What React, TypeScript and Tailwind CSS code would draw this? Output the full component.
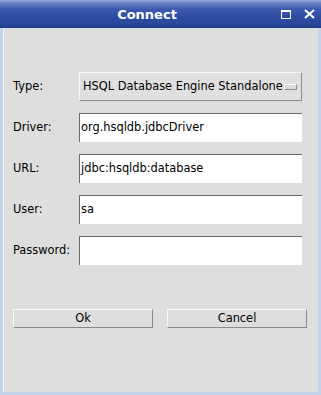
import React from "react";

function Field({ value }: { value: string }) {
  return (
    <div className="flex-1 h-[29px] bg-white border-t border-l border-[#6a6a6a] flex items-center pl-[1px] text-black">
      {value}
    </div>
  );
}

function Row({ label, children }: { label: string; children: React.ReactNode }) {
  return (
    <div className="flex items-center h-[29px]">
      <div className="w-[66px] text-black">{label}</div>
      {children}
    </div>
  );
}

function Button({ label }: { label: string }) {
  return (
    <div className="w-[140px] h-[19px] flex items-center justify-center border border-t-[#fafafa] border-l-[#fafafa] border-b-[#8a8a8a] border-r-[#8a8a8a] bg-[#dedede] text-black">
      {label}
    </div>
  );
}

export default function App() {
  return (
    <div
      className="w-[321px] h-[395px] flex flex-col bg-[#c4d2ea] text-[11.4px]"
      style={{ fontFamily: '"DejaVu Sans", sans-serif' }}
    >
      <div className="h-[28px] flex items-center bg-[linear-gradient(to_bottom,#9aacdc_0px,#6a82c6_3px,#3d5bae_9px,#2c4ba0_18px,#2a479a_25px,#1f3a88_27px)]">
        <div className="w-[281px] pl-[13px] text-center text-white font-bold text-[13px] leading-none">
          Connect
        </div>
        <div className="flex items-center gap-[13px]">
          <div className="w-[10px] h-[9px] border border-t-2 border-white" />
          <svg width="11" height="10" viewBox="0 0 11 10">
            <path d="M1 1 L10 9 M10 1 L1 9" stroke="white" strokeWidth="2" />
          </svg>
        </div>
      </div>
      <div className="flex-1 flex flex-col ml-[3px] mr-[3px] mb-[3px] bg-[#dedede] border-l border-[#eef2f9]">
        <div className="flex flex-col gap-[12px] pt-[44px] pl-[9px] pr-[16px]">
          <Row label="Type:">
            <div className="flex-1 h-[29px] flex items-center justify-between pl-[3px] pr-[4px] border border-t-[#f8f8f8] border-l-[#f8f8f8] border-b-[#8a8a8a] border-r-[#8a8a8a] bg-[#e0e0e0] text-black">
              <span>HSQL Database Engine Standalone</span>
              <div className="w-[13px] h-[6px] border border-t-[#fafafa] border-l-[#fafafa] border-b-[#8a8a8a] border-r-[#8a8a8a] bg-[#dcdcdc]" />
            </div>
          </Row>
          <Row label="Driver:">
            <Field value="org.hsqldb.jdbcDriver" />
          </Row>
          <Row label="URL:">
            <Field value="jdbc:hsqldb:database" />
          </Row>
          <Row label="User:">
            <Field value="sa" />
          </Row>
          <Row label="Password:">
            <Field value="" />
          </Row>
        </div>
        <div className="flex gap-[14px] pt-[44px] pl-[9px]">
          <Button label="Ok" />
          <Button label="Cancel" />
        </div>
      </div>
    </div>
  );
}
